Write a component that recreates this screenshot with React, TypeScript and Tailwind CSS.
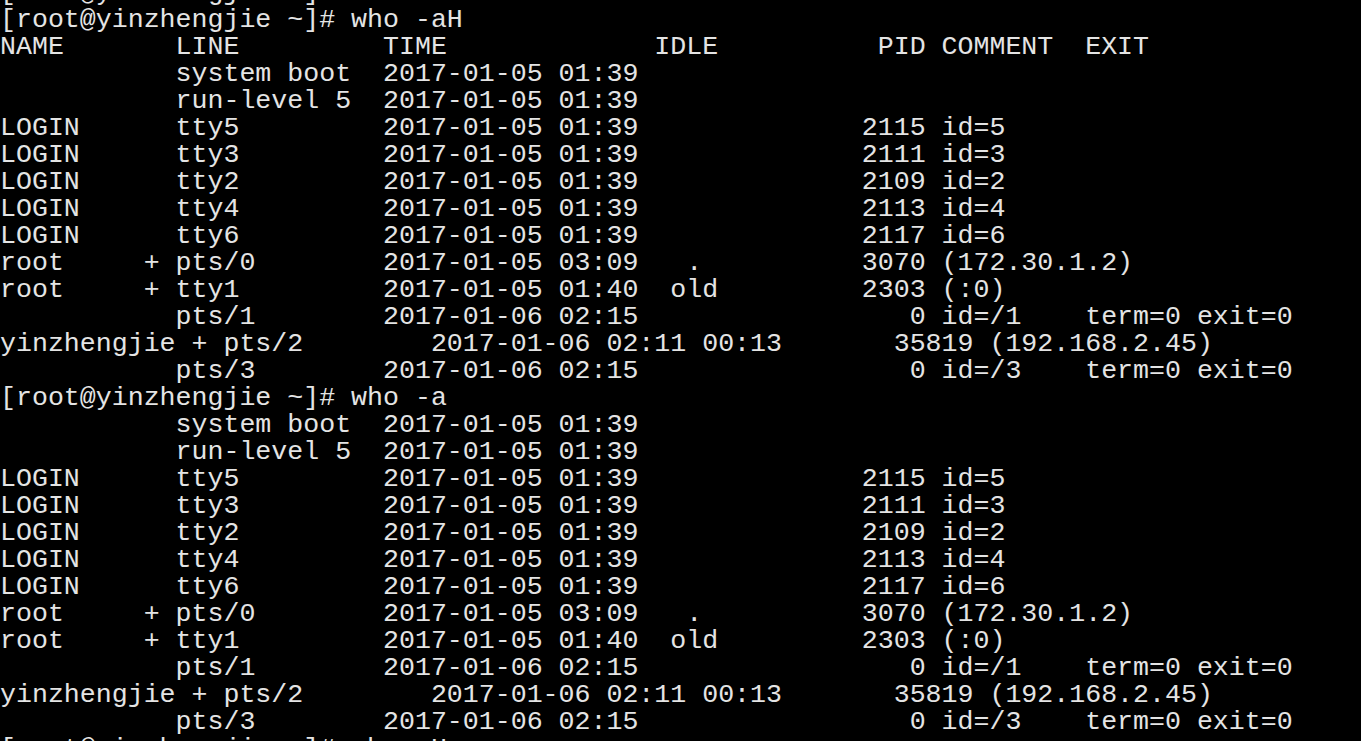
import React from "react";

type Seg = [number, string];

function build(segs: Seg[]): string {
  let s = "";
  for (const [col, text] of segs) {
    if (s.length < col) s += " ".repeat(col - s.length);
    else if (s.length > 0 && s.length >= col) s += " ";
    s += text;
  }
  return s;
}

const block: Seg[][] = [
  [[11, "system boot"], [24, "2017-01-05 01:39"]],
  [[11, "run-level 5"], [24, "2017-01-05 01:39"]],
  [[0, "LOGIN"], [11, "tty5"], [24, "2017-01-05 01:39"], [54, "2115"], [59, "id=5"]],
  [[0, "LOGIN"], [11, "tty3"], [24, "2017-01-05 01:39"], [54, "2111"], [59, "id=3"]],
  [[0, "LOGIN"], [11, "tty2"], [24, "2017-01-05 01:39"], [54, "2109"], [59, "id=2"]],
  [[0, "LOGIN"], [11, "tty4"], [24, "2017-01-05 01:39"], [54, "2113"], [59, "id=4"]],
  [[0, "LOGIN"], [11, "tty6"], [24, "2017-01-05 01:39"], [54, "2117"], [59, "id=6"]],
  [[0, "root"], [9, "+"], [11, "pts/0"], [24, "2017-01-05 03:09"], [43, "."], [54, "3070"], [59, "(172.30.1.2)"]],
  [[0, "root"], [9, "+"], [11, "tty1"], [24, "2017-01-05 01:40"], [42, "old"], [54, "2303"], [59, "(:0)"]],
  [[11, "pts/1"], [24, "2017-01-06 02:15"], [57, "0"], [59, "id=/1"], [68, "term=0"], [75, "exit=0"]],
  [[0, "yinzhengjie"], [12, "+"], [14, "pts/2"], [27, "2017-01-06 02:11"], [44, "00:13"], [56, "35819"], [62, "(192.168.2.45)"]],
  [[11, "pts/3"], [24, "2017-01-06 02:15"], [57, "0"], [59, "id=/3"], [68, "term=0"], [75, "exit=0"]],
];

const header: Seg[] = [[0, "NAME"], [11, "LINE"], [24, "TIME"], [41, "IDLE"], [55, "PID"], [59, "COMMENT"], [68, "EXIT"]];

const lines: string[] = [
  "[root@yinzhengjie ~]# who -H",
  "[root@yinzhengjie ~]# who -aH",
  build(header),
  ...block.map(build),
  "[root@yinzhengjie ~]# who -a",
  ...block.map(build),
  "[root@yinzhengjie ~]# who -H",
];

export default function App() {
  return (
    <div className="w-[1361px] h-[741px] overflow-hidden bg-black">
      <div
        className="mt-[-20px] text-[26.6px] leading-[27px] text-[#e4e4e4] whitespace-pre"
        style={{ fontFamily: '"Liberation Mono", "DejaVu Sans Mono", monospace' }}
      >
        {lines.map((l, i) => (
          <div key={i} className="h-[27px]">
            {l || " "}
          </div>
        ))}
      </div>
    </div>
  );
}
